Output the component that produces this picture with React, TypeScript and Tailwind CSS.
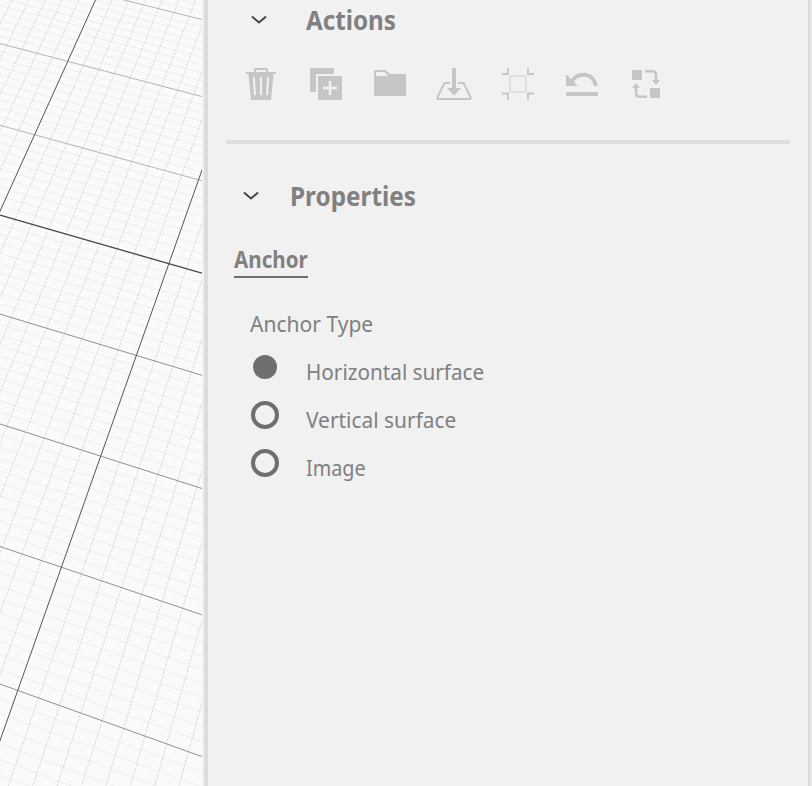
import { ReactNode } from "react";

// Vanishing points of the two line families on the floor plane
const STEEP_VP = { x: 863, y: -1697 };
const CROSS_VP = { x: -6637, y: -1698 };

const FloorGrid = () => {
  const minor: ReactNode[] = [];
  const major: ReactNode[] = [];

  for (let m = -40; m <= 54; m++) {
    const x = -746 - 29 * m;
    const slope = -CROSS_VP.y / (x - CROSS_VP.x);
    const isMajor = m % 10 === 0;
    const stroke =
      m === 0 ? "#444444" : isMajor ? (m < 0 ? "#b4b4b4" : "#909090") : "#eeeeee";
    (isMajor ? major : minor).push(
      <line
        key={`c${m}`}
        x1={0}
        y1={-x * slope}
        x2={202}
        y2={(202 - x) * slope}
        stroke={stroke}
        strokeWidth={m === 0 ? 1.3 : 1}
      />
    );
  }

  for (let j = -12; j <= 42; j++) {
    const x = 95.5 + 16.67 * j;
    const bottom = STEEP_VP.x + ((x - STEEP_VP.x) * (786 - STEEP_VP.y)) / -STEEP_VP.y;
    const isMajor = j % 10 === 0;
    (isMajor ? major : minor).push(
      <line
        key={`s${j}`}
        x1={x}
        y1={0}
        x2={bottom}
        y2={786}
        stroke={isMajor ? "#555555" : "#d6d6d6"}
        strokeWidth={isMajor ? 1 : 0.9}
        strokeDasharray={isMajor ? undefined : "3 1"}
      />
    );
  }

  return (
    <svg width="202" height="786" viewBox="0 0 202 786" className="block shrink-0 bg-[#fafafa]">
      {minor}
      {major}
    </svg>
  );
};

const Chevron = () => (
  <svg width="16" height="10" viewBox="0 0 16 10" fill="none" className="shrink-0">
    <path d="M1.5 2 8 7.5 14.5 2" stroke="#444" strokeWidth="1.9" strokeLinecap="round" />
  </svg>
);

const Icon = ({ children }: { children: ReactNode }) => (
  <svg width="36" height="36" viewBox="0 0 36 36" fill="#c6c6c6" className="shrink-0 overflow-visible">
    {children}
  </svg>
);

const Toolbar = () => (
  <div className="flex gap-7 pl-[35px]">
    {/* Delete */}
    <Icon>
      <path
        d="M3 6h8V4a2 2 0 0 1 2-2h10a2 2 0 0 1 2 2v2h8v2h-2.500l-2.500 26H8L5.500 8H3zM13 6h10V4H13zM9.800 11l1.200 18h2l-1.200-18zM17 11v18h2V11zm7.200 0L23 29h2l1.200-18z"
        fillRule="evenodd"
      />
    </Icon>
    {/* Duplicate */}
    <Icon>
      <path d="M3 2h24v6H9v18H3z" />
      <path
        d="M11 10h24v24H11zM21.700 15v5.700H16v2.600h5.700V29h2.600v-5.700H30v-2.600h-5.700V15z"
        fillRule="evenodd"
      />
    </Icon>
    {/* Group */}
    <Icon>
      <path
        d="M3 6a2 2 0 0 1 2-2h8.500a2 2 0 0 1 1.500.6L19 8h16v22H3zM5 6v4h12l-3.500-4z"
        fillRule="evenodd"
      />
    </Icon>
    {/* Drop to ground */}
    <Icon>
      <path
        d="M15 17H9.500L2.300 31.500q-.5 1.500 1 1.500h31.400q1.500 0 1-1.500L28.500 17H23"
        fill="none"
        stroke="#c6c6c6"
        strokeWidth="2"
        strokeLinejoin="round"
      />
      <path d="M17 2h4v20h5l-7 7.500L12 22h5z" />
    </Icon>
    {/* Frame */}
    <Icon>
      <g fill="none">
        <rect x="11" y="10" width="16" height="16" rx="1" stroke="#dadada" strokeWidth="1.6" />
        <path
          d="M3 8h6V2M29 2v6h6M35 27.500h-6v6.500M9 34v-6.500H3"
          stroke="#c6c6c6"
          strokeWidth="1.8"
        />
      </g>
    </Icon>
    {/* Reset */}
    <Icon>
      <path d="M3 8v12h12z" />
      <path d="M8.500 15.500C15 6 30 5.500 33 20" fill="none" stroke="#c6c6c6" strokeWidth="4" />
      <rect x="3" y="26" width="32" height="4" rx="1" />
    </Icon>
    {/* Swap */}
    <Icon>
      <path d="M5 4h10v10H5zM23 22h10v10H23z" />
      <path
        d="M18 5.300h7q4 0 4 4V15M20 30.700h-7q-4 0-4-4V21"
        fill="none"
        stroke="#c6c6c6"
        strokeWidth="2.6"
      />
      <path d="M25 14h8l-4 5zM5 22h8l-4-5z" />
    </Icon>
  </div>
);

const anchorTypes = [
  { label: "Horizontal surface", scale: "scale-x-[0.92]", selected: true },
  { label: "Vertical surface", scale: "scale-x-[0.929]", selected: false },
  { label: "Image", scale: "scale-x-[0.88]", selected: false },
];

export default function App() {
  return (
    <div className="flex h-[786px] w-[812px] overflow-hidden bg-[#f1f1f1] font-['Noto_Sans',sans-serif] text-[#808080]">
      <FloorGrid />
      <div className="w-0.5 shrink-0 bg-[#f1f1f1]" />
      <div className="w-1 shrink-0 bg-[#dcdcdc]" />

      <div className="flex w-[600px] shrink-0 flex-col">
        <div className="flex h-10 items-center pl-[43px]">
          <Chevron />
          <h2 className="ml-[39px] origin-left scale-x-[0.93] text-[26px] leading-10 font-bold whitespace-nowrap">
            Actions
          </h2>
        </div>
        <div className="pt-[26px]">
          <Toolbar />
        </div>
        <div className="mt-[38px] ml-[18px] h-1 w-[564px] bg-[#dddddd]" />

        <div className="mt-8 flex h-10 items-center pl-[35px]">
          <Chevron />
          <h2 className="ml-[31px] origin-left scale-x-[0.935] text-[26px] leading-10 font-bold whitespace-nowrap">
            Properties
          </h2>
        </div>

        <div className="mt-7 ml-[26px] h-[34px] w-[74px] border-b-2 border-[#6e6e6e]">
          <span className="block origin-left scale-x-[0.915] text-[22.5px] leading-8 font-bold whitespace-nowrap">
            Anchor
          </span>
        </div>

        <p className="mt-[30px] ml-[42px] w-max origin-left scale-x-[0.935] text-[22.5px] leading-8 whitespace-nowrap">
          Anchor Type
        </p>
        <div className="mt-4 flex flex-col gap-4 pl-[43px]">
          {anchorTypes.map(({ label, scale, selected }) => (
            <label key={label} className="flex h-8 items-center">
              <span className="mb-2.5 flex size-7 shrink-0 items-center justify-center">
                {selected ? (
                  <span className="size-6 rounded-full bg-[#6e6e6e]" />
                ) : (
                  <span className="size-7 rounded-full border-4 border-[#6e6e6e]" />
                )}
              </span>
              <span
                className={`ml-[27px] origin-left text-[22.5px] leading-8 whitespace-nowrap ${scale}`}
              >
                {label}
              </span>
            </label>
          ))}
        </div>
      </div>

      <div className="w-0.5 shrink-0 bg-[#dcdcdc]" />
      <div className="w-0.5 shrink-0 bg-[#e8e8e8]" />
    </div>
  );
}
